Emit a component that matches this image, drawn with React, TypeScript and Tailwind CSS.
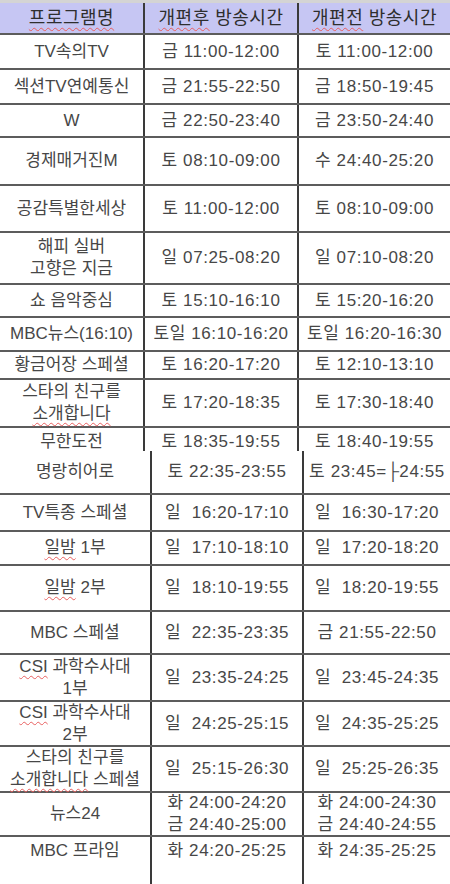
import React from "react";

type Cell = React.ReactNode;

interface Row {
  h: string;
  cells: [Cell, Cell, Cell];
  last?: boolean;
}

function Wavy({ children }: { children: React.ReactNode }) {
  return (
    <span className="underline decoration-wavy decoration-[#e86060] decoration-1 underline-offset-[3px]">
      {children}
    </span>
  );
}

function Lines({ items }: { items: React.ReactNode[] }) {
  return (
    <div className="flex flex-col items-center leading-[22px]">
      {items.map((t, i) => (
        <span key={i} className="whitespace-nowrap">
          {t}
        </span>
      ))}
    </div>
  );
}

const topRows: Row[] = [
  { h: "h-[35px]", cells: ["TV속의TV", "금 11:00-12:00", "토 11:00-12:00"] },
  { h: "h-[35px]", cells: ["섹션TV연예통신", "금 21:55-22:50", "금 18:50-19:45"] },
  { h: "h-[33px]", cells: ["W", "금 22:50-23:40", "금 23:50-24:40"] },
  { h: "h-[48px]", cells: ["경제매거진M", "토 08:10-09:00", "수 24:40-25:20"] },
  { h: "h-[47px]", cells: ["공감특별한세상", "토 11:00-12:00", "토 08:10-09:00"] },
  {
    h: "h-[52px]",
    cells: [<Lines items={["해피 실버", "고향은 지금"]} />, "일 07:25-08:20", "일 07:10-08:20"],
  },
  { h: "h-[33px]", cells: ["쇼 음악중심", "토 15:10-16:10", "토 15:20-16:20"] },
  { h: "h-[34px]", cells: ["MBC뉴스(16:10)", "토일 16:10-16:20", "토일 16:20-16:30"] },
  { h: "h-[28px]", cells: ["황금어장 스페셜", "토 16:20-17:20", "토 12:10-13:10"] },
  {
    h: "h-[48px]",
    cells: [
      <Lines items={["스타의 친구를", <Wavy>소개합니다</Wavy>]} />,
      "토 17:20-18:35",
      "토 17:30-18:40",
    ],
  },
  { h: "h-[23px]", cells: ["무한도전", "토 18:35-19:55", "토 18:40-19:55"], last: true },
];

const bottomRows: Row[] = [
  { h: "h-[44px]", cells: ["명랑히어로", "토 22:35-23:55", "토 23:45=├24:55"] },
  { h: "h-[37px]", cells: ["TV특종 스페셜", "일  16:20-17:10", "일  16:30-17:20"] },
  { h: "h-[34px]", cells: [<span><Wavy>일밤</Wavy> 1부</span>, "일  17:10-18:10", "일  17:20-18:20"] },
  { h: "h-[46px]", cells: [<span><Wavy>일밤</Wavy> 2부</span>, "일  18:10-19:55", "일  18:20-19:55"] },
  { h: "h-[43px]", cells: ["MBC 스페셜", "일  22:35-23:35", "금 21:55-22:50"] },
  {
    h: "h-[47px]",
    cells: [
      <Lines items={[<span><Wavy>CSI</Wavy> 과학수사대</span>, "1부"]} />,
      "일  23:35-24:25",
      "일  23:45-24:35",
    ],
  },
  {
    h: "h-[45px]",
    cells: [
      <Lines items={[<span><Wavy>CSI</Wavy> 과학수사대</span>, "2부"]} />,
      "일  24:25-25:15",
      "일  24:35-25:25",
    ],
  },
  {
    h: "h-[46px]",
    cells: [
      <Lines items={["스타의 친구를", <span><Wavy>소개합니다</Wavy> 스페셜</span>]} />,
      "일  25:15-26:30",
      "일  25:25-26:35",
    ],
  },
  {
    h: "h-[44px]",
    cells: [
      "뉴스24",
      <Lines items={["화 24:00-24:20", "금 24:40-25:00"]} />,
      <Lines items={["화 24:00-24:30", "금 24:40-24:55"]} />,
    ],
  },
  { h: "h-[47px]", cells: ["MBC 프라임", "화 24:20-25:25", "화 24:35-25:25"], last: true },
];

function TableRow({ row, widths }: { row: Row; widths: [string, string] }) {
  const base = "flex justify-center whitespace-pre";
  const align = row.last ? "items-start pt-[1px]" : "items-center";
  return (
    <div className={`flex ${row.h} ${row.last ? "" : "border-b-2 border-[#5c5c5c]"}`}>
      <div className={`${base} ${align} ${widths[0]} shrink-0 border-r-2 border-[#3a3a3a]`}>{row.cells[0]}</div>
      <div className={`${base} ${align} ${widths[1]} shrink-0 border-r-2 border-[#3a3a3a] tracking-[0.6px]`}>
        {row.cells[1]}
      </div>
      <div className={`${base} ${align} flex-1 tracking-[0.6px]`}>{row.cells[2]}</div>
    </div>
  );
}

export default function App() {
  const topW: [string, string] = ["w-[145px]", "w-[154px]"];
  const botW: [string, string] = ["w-[152px]", "w-[152px]"];
  return (
    <div className="w-[450px] h-[884px] overflow-hidden bg-white text-[#474747] text-[17px] font-['Liberation_Sans','Noto_Sans_CJK_KR',sans-serif]">
      {/* header */}
      <div className="h-[3px] bg-[#d4d4d4]" />
      <div className="flex h-[32px] bg-[#c6c6f3] border-b-2 border-[#5c5c5c] text-[18px] text-[#2e2e2e] tracking-[0.5px]">
        <div className="w-[145px] shrink-0 flex items-center justify-center border-r-2 border-[#3a3a3a]">
          <Wavy>프로그램명</Wavy>
        </div>
        <div className="w-[154px] shrink-0 flex items-center justify-center border-r-2 border-[#3a3a3a]">
          <span>
            <Wavy>개편후</Wavy> 방송시간
          </span>
        </div>
        <div className="flex-1 flex items-center justify-center">
          <span>
            <Wavy>개편전</Wavy> 방송시간
          </span>
        </div>
      </div>

      {/* upper part */}
      {topRows.map((r, i) => (
        <TableRow key={i} row={r} widths={topW} />
      ))}

      {/* lower part, shifted sheet */}
      {bottomRows.map((r, i) => (
        <TableRow key={i} row={r} widths={botW} />
      ))}
    </div>
  );
}
